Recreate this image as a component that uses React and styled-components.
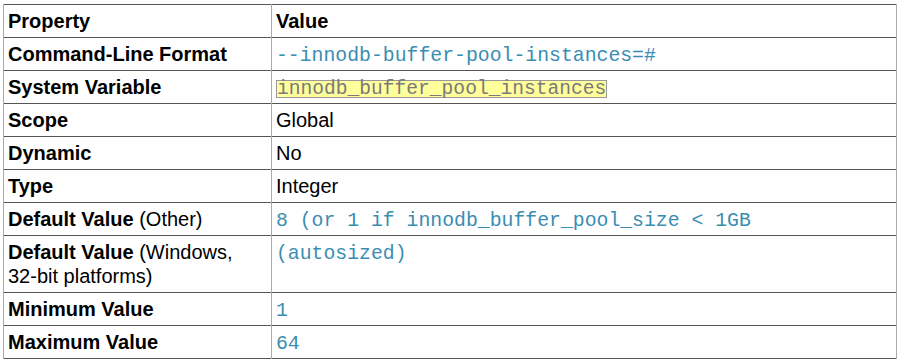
import React from "react";
import styled, { createGlobalStyle } from "styled-components";

const Global = createGlobalStyle`
  html, body { margin: 0; padding: 0; background: #fff; }
  body { font-family: "Liberation Sans", Arial, sans-serif; }
`;

const Wrap = styled.div`
  padding: 4px 3px;
`;

const Table = styled.table`
  width: 894px;
  border-collapse: collapse;
  table-layout: fixed;
  font-family: "Liberation Sans", Arial, sans-serif;
  font-size: 20px;
  line-height: 24px;
  color: #000;
`;

const Row = styled.tr`
  border-top: 1px solid #555;
  border-bottom: 1px solid #555;
`;

const Cell = styled.td`
  padding: 4px;
  height: 24px;
  box-sizing: content-box;
  vertical-align: top;
  border-left: 1px solid #aaa;
  border-right: 1px solid #aaa;
  font-weight: ${(p) => (p.$head ? "bold" : "normal")};
  text-align: left;
`;

const Label = styled.b`
  font-weight: bold;
`;

const NoWrap = styled.span`
  white-space: nowrap;
`;

const Code = styled.code`
  font-family: "Liberation Mono", "Courier New", monospace;
  font-size: 19.8px;
  line-height: 20px;
  color: #3a8db2;
`;

const Highlight = styled.code`
  font-family: "Liberation Mono", "Courier New", monospace;
  font-size: 19.6px;
  color: #7a7a7a;
  background: #ffff9c;
  border: 1px solid #999;
  line-height: 16px;
  display: inline-block;
  vertical-align: baseline;
`;

const rows = [
  { label: <Label>Command-Line Format</Label>, value: <Code>--innodb-buffer-pool-instances=#</Code> },
  { label: <Label>System Variable</Label>, value: <Highlight>innodb_buffer_pool_instances</Highlight> },
  { label: <Label>Scope</Label>, value: "Global" },
  { label: <Label>Dynamic</Label>, value: "No" },
  { label: <Label>Type</Label>, value: "Integer" },
  { label: <><Label>Default Value</Label> (Other)</>, value: <Code>8 (or 1 if innodb_buffer_pool_size &lt; 1GB</Code> },
  {
    label: (
      <>
        <Label>Default Value</Label> (Windows, <NoWrap>32-bit</NoWrap> platforms)
      </>
    ),
    value: <Code>(autosized)</Code>,
  },
  { label: <Label>Minimum Value</Label>, value: <Code>1</Code> },
  { label: <Label>Maximum Value</Label>, value: <Code>64</Code> },
];

export default function App() {
  return (
    <>
      <Global />
      <Wrap>
        <Table>
          <colgroup>
            <col style={{ width: "268px" }} />
            <col />
          </colgroup>
          <thead>
            <Row>
              <Cell as="th" $head>Property</Cell>
              <Cell as="th" $head>Value</Cell>
            </Row>
          </thead>
          <tbody>
            {rows.map((r, i) => (
              <Row key={i}>
                <Cell>{r.label}</Cell>
                <Cell>{r.value}</Cell>
              </Row>
            ))}
          </tbody>
        </Table>
      </Wrap>
    </>
  );
}
